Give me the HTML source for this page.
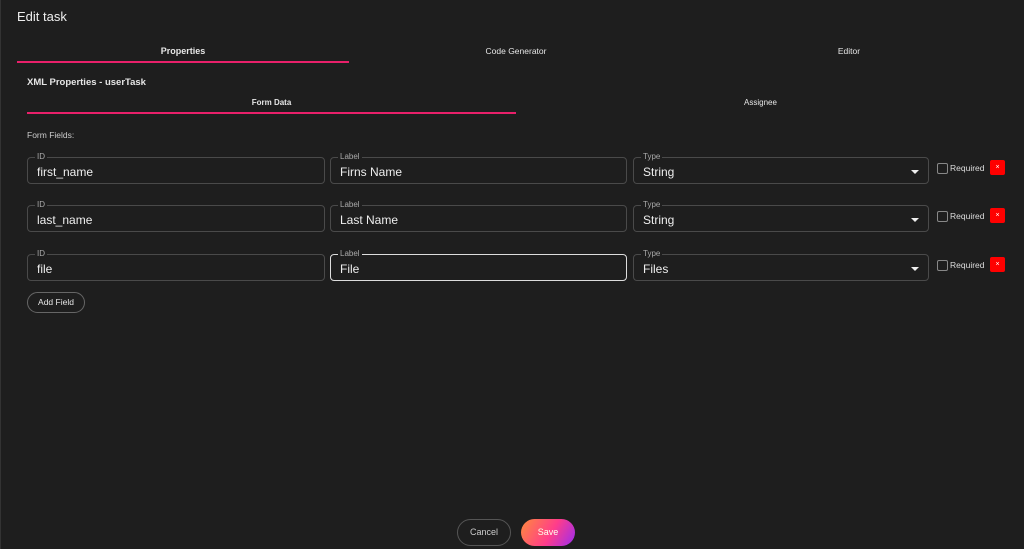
<!DOCTYPE html><html><head><style>
body{margin:0;width:1024px;height:549px;background:#1e1e1e;font-family:"Liberation Sans",sans-serif;color:#e6e6e6;position:relative;overflow:hidden}
.a{position:absolute}
.t{font-size:9px;font-weight:bold;text-align:center}
.f{position:absolute;height:26px;border:1px solid #4a4a4a;border-radius:4px;box-sizing:border-box}
.f span.l{position:absolute;top:-6px;left:7px;background:#1e1e1e;padding:0 2px;font-size:8px;color:#aaa;line-height:10px}
.f span.v{position:absolute;left:9px;top:7px;font-size:12px;color:#eee}
.arr{position:absolute;right:9px;top:12px;border-left:4px solid transparent;border-right:4px solid transparent;border-top:4px solid #eee}
.cb{position:absolute;width:9px;height:9px;border:1px solid #888;border-radius:2px}
.rq{position:absolute;font-size:8.5px;color:#ddd}
.x{position:absolute;width:15px;height:15px;background:#f00;border-radius:2px;color:#fff;font-size:7px;display:flex;align-items:center;justify-content:center}
.btn{position:absolute;border-radius:14px;font-size:9px;text-align:center;box-sizing:border-box}
</style></head><body>
<div class="a" style="left:0;top:0;width:1px;height:549px;background:#333"></div>
<div class="a" style="left:17px;top:9px;font-size:13px;color:#eee">Edit task</div>
<div class="a t" style="left:17px;top:46px;width:332px">Properties</div>
<div class="a" style="left:17px;top:61px;width:332px;height:2px;background:#e8206a"></div>
<div class="a t" style="left:350px;top:46px;width:332px;font-weight:normal;font-size:8.5px">Code Generator</div>
<div class="a t" style="left:683px;top:46px;width:332px;font-weight:normal;font-size:8.5px">Editor</div>
<div class="a" style="left:27px;top:77px;font-size:9.5px;font-weight:bold">XML Properties - userTask</div>
<div class="a t" style="left:27px;top:98px;width:489px;font-size:8px">Form Data</div>
<div class="a" style="left:27px;top:112px;width:489px;height:2px;background:#e8206a"></div>
<div class="a t" style="left:516px;top:98px;width:489px;font-size:8px;font-weight:normal">Assignee</div>
<div class="a" style="left:27px;top:130px;font-size:8.5px;color:#ccc">Form Fields:</div>

<div class="f" style="left:27px;top:157px;width:298px;height:27px"><span class="l">ID</span><span class="v">first_name</span></div>
<div class="f" style="left:330px;top:157px;width:297px;height:27px"><span class="l">Label</span><span class="v">Firns Name</span></div>
<div class="f" style="left:633px;top:157px;width:296px;height:27px"><span class="l">Type</span><span class="v">String</span><div class="arr"></div></div>
<div class="cb" style="left:937px;top:163px"></div><div class="rq" style="left:950px;top:163px">Required</div><div class="x" style="left:990px;top:160px">×</div>

<div class="f" style="left:27px;top:205px;width:298px;height:27px"><span class="l">ID</span><span class="v">last_name</span></div>
<div class="f" style="left:330px;top:205px;width:297px;height:27px"><span class="l">Label</span><span class="v">Last Name</span></div>
<div class="f" style="left:633px;top:205px;width:296px;height:27px"><span class="l">Type</span><span class="v">String</span><div class="arr"></div></div>
<div class="cb" style="left:937px;top:211px"></div><div class="rq" style="left:950px;top:211px">Required</div><div class="x" style="left:990px;top:208px">×</div>

<div class="f" style="left:27px;top:254px;width:298px;height:27px"><span class="l">ID</span><span class="v">file</span></div>
<div class="f" style="left:330px;top:254px;width:297px;height:27px;border-color:#ddd"><span class="l">Label</span><span class="v">File</span></div>
<div class="f" style="left:633px;top:254px;width:296px;height:27px"><span class="l">Type</span><span class="v">Files</span><div class="arr"></div></div>
<div class="cb" style="left:937px;top:260px"></div><div class="rq" style="left:950px;top:260px">Required</div><div class="x" style="left:990px;top:257px">×</div>

<div class="btn" style="left:27px;top:292px;width:58px;height:21px;border:1px solid #666;line-height:19px;font-size:8.5px">Add Field</div>
<div class="btn" style="left:457px;top:519px;width:54px;height:27px;border:1px solid #555;line-height:25px;color:#ccc">Cancel</div>
<div class="btn" style="left:521px;top:519px;width:54px;height:27px;line-height:27px;color:#ffe;background:linear-gradient(120deg,#ff8a3d,#ff3d8a 55%,#9b2cf0)">Save</div>
</body></html>
